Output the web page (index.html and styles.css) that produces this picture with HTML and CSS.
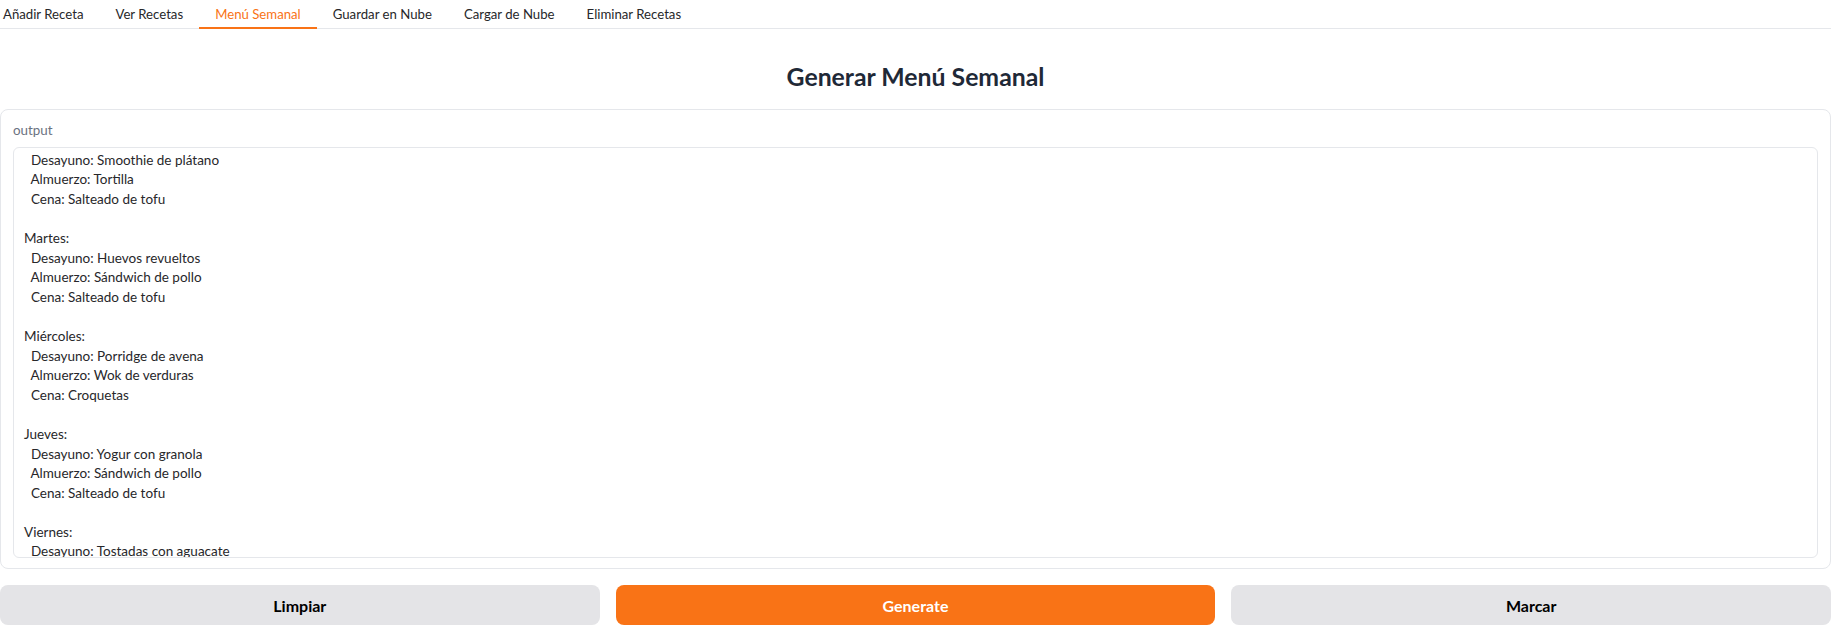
FILE: index.html
```html
<!DOCTYPE html>
<html lang="es">
<head>
<meta charset="utf-8">
<title>Recetas</title>
<link rel="stylesheet" href="styles.css">
</head>
<body>
<div class="app">
  <nav class="tab-nav">
    <button class="tab">Añadir Receta</button>
    <button class="tab">Ver Recetas</button>
    <button class="tab selected">Menú Semanal</button>
    <button class="tab">Guardar en Nube</button>
    <button class="tab">Cargar de Nube</button>
    <button class="tab">Eliminar Recetas</button>
  </nav>
  <section class="tab-panel">
    <h1 class="title">Generar Menú Semanal</h1>
    <div class="block">
      <div class="label">output</div>
      <div class="output" id="output">Lunes:
  Desayuno: Smoothie de plátano
  Almuerzo: Tortilla
  Cena: Salteado de tofu

Martes:
  Desayuno: Huevos revueltos
  Almuerzo: Sándwich de pollo
  Cena: Salteado de tofu

Miércoles:
  Desayuno: Porridge de avena
  Almuerzo: Wok de verduras
  Cena: Croquetas

Jueves:
  Desayuno: Yogur con granola
  Almuerzo: Sándwich de pollo
  Cena: Salteado de tofu

Viernes:
  Desayuno: Tostadas con aguacate
  Almuerzo: Wok de verduras
  Cena: Croquetas

Sábado:
  Desayuno: Huevos revueltos
  Almuerzo: Tortilla
  Cena: Salteado de tofu

Domingo:
  Desayuno: Smoothie de plátano
  Almuerzo: Sándwich de pollo
  Cena: Croquetas</div>
    </div>
    <div class="actions">
      <button class="btn secondary">Limpiar</button>
      <button class="btn primary">Generate</button>
      <button class="btn secondary">Marcar</button>
    </div>
  </section>
</div>
<script src="script.js"></script>
</body>
</html>
```

FILE: styles.css
```css
* { box-sizing: border-box; }
html, body { margin: 0; padding: 0; background: #fff; }
body {
  font-family: Lato, "Liberation Sans", sans-serif;
  color: #27272a;
}
.app {
  width: 1831px;
}
.tab-nav {
  display: flex;
  margin-left: -13px;
  border-bottom: 1px solid #e5e7eb;
  height: 29px;
}
.tab {
  font-family: inherit;
  font-size: 13.2px;
  color: #27272a;
  background: none;
  border: none;
  border-bottom: 2px solid transparent;
  padding: 0 16px;
  height: 29px;
  margin-bottom: -1px;
  cursor: pointer;
}
.tab.selected {
  color: #f97316;
  border-bottom-color: #f97316;
}
.tab-panel {
  display: flex;
  flex-direction: column;
}
.title {
  margin: 31px 0 15px;
  font-size: 24.8px;
  line-height: 34px;
  font-weight: 700;
  text-align: center;
  color: #1f2937;
}
.block {
  border: 1px solid #e5e7eb;
  border-radius: 8px;
  padding: 10px 12px 10px 12px;
}
.label {
  font-size: 13.4px;
  line-height: 20px;
  color: #6b7280;
  margin-bottom: 7px;
}
.output {
  height: 411px;
  border: 1px solid #e5e7eb;
  border-radius: 6px;
  padding: 10px;
  font-size: 13.5px;
  line-height: 19.6px;
  white-space: pre;
  overflow: hidden;
  color: #27272a;
}
.actions {
  margin-top: 16px;
  display: grid;
  grid-template-columns: 1fr 1fr 1fr;
  gap: 16px;
}
.btn {
  height: 40px;
  border: none;
  border-radius: 8px;
  font-family: inherit;
  font-size: 16px;
  font-weight: 700;
  cursor: pointer;
}
.btn.secondary {
  background: #e4e4e7;
  color: #000;
}
.btn.primary {
  background: #f97316;
  color: #fff;
}
```

FILE: script.js
```js
document.getElementById('output').scrollTop = 27;
```
